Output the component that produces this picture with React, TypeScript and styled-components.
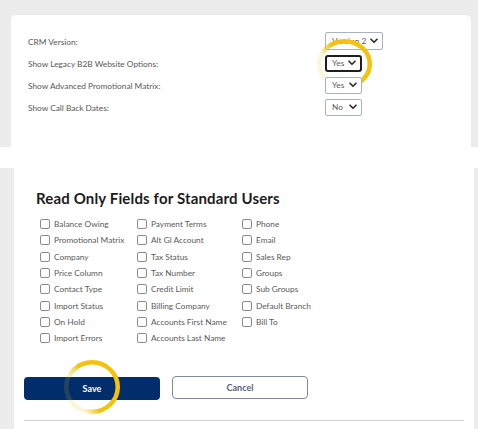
import React from "react";
import styled, { createGlobalStyle } from "styled-components";

const GlobalStyle = createGlobalStyle`
    html, body {
        margin: 0;
        padding: 0;
        background: #ffffff;
    }
    body {
        font-family: Lato, "Liberation Sans", Arial, sans-serif;
        -webkit-font-smoothing: antialiased;
    }
`;

type SelectOption = {
    label: string;
    value: string;
    wide?: boolean;
    focused?: boolean;
    marked?: boolean;
};

const settings: SelectOption[] = [
    { label: "CRM Version:", value: "Version 2", wide: true },
    { label: "Show Legacy B2B Website Options:", value: "Yes", focused: true, marked: true },
    { label: "Show Advanced Promotional Matrix:", value: "Yes" },
    { label: "Show Call Back Dates:", value: "No" },
];

// fields listed column by column
const readOnlyFields: string[][] = [
    [
        "Balance Owing",
        "Promotional Matrix",
        "Company",
        "Price Column",
        "Contact Type",
        "Import Status",
        "On Hold",
        "Import Errors",
    ],
    [
        "Payment Terms",
        "Alt Gl Account",
        "Tax Status",
        "Tax Number",
        "Credit Limit",
        "Billing Company",
        "Accounts First Name",
        "Accounts Last Name",
    ],
    ["Phone", "Email", "Sales Rep", "Groups", "Sub Groups", "Default Branch", "Bill To"],
];

function Chevron() {
    return (
        <svg width="8" height="6" viewBox="0 0 8 6">
            <path d="M1 1.2 L4 4.3 L7 1.2" fill="none" stroke="#2b2b2b" strokeWidth="1.6" strokeLinecap="round" strokeLinejoin="round" />
        </svg>
    );
}

// hand-drawn highlight ring
function Ring({ id, w, h }: { id: string; w: number; h: number }) {
    const sw = 4.5;
    return (
        <svg width={w} height={h} viewBox={`0 0 ${w} ${h}`}>
            <defs>
                <linearGradient id={id} x1="0" y1="0.2" x2="0.45" y2="0">
                    <stop offset="0" stopColor="#f4c20d" stopOpacity="0.15" />
                    <stop offset="0.55" stopColor="#f4c20d" stopOpacity="1" />
                    <stop offset="1" stopColor="#f4c20d" stopOpacity="1" />
                </linearGradient>
            </defs>
            <ellipse
                cx={w / 2}
                cy={h / 2}
                rx={(w - sw) / 2}
                ry={(h - sw) / 2}
                fill="none"
                stroke={`url(#${id})`}
                strokeWidth={sw}
            />
        </svg>
    );
}

export default function App() {
    return (
        <>
            <GlobalStyle />
            <TopPanel>
                <SettingsCard>
                    <SettingsGrid>
                        {settings.map((s) => (
                            <React.Fragment key={s.label}>
                                <SettingLabel>{s.label}</SettingLabel>
                                <SelectWrap>
                                    <SelectBox $wide={s.wide} $focused={s.focused}>
                                        <SelectValue>{s.value}</SelectValue>
                                        <Chevron />
                                    </SelectBox>
                                    {s.marked && (
                                        <SelectRing>
                                            <Ring id="ring-select" w={55} h={50} />
                                        </SelectRing>
                                    )}
                                </SelectWrap>
                            </React.Fragment>
                        ))}
                    </SettingsGrid>
                </SettingsCard>
            </TopPanel>

            <BottomPanel>
                <FieldsCard>
                    <Heading>Read Only Fields for Standard Users</Heading>
                    <FieldColumns>
                        {readOnlyFields.map((col, i) => (
                            <FieldColumn key={i}>
                                {col.map((name) => (
                                    <FieldRow key={name}>
                                        <Check type="checkbox" />
                                        <FieldName>{name}</FieldName>
                                    </FieldRow>
                                ))}
                            </FieldColumn>
                        ))}
                    </FieldColumns>

                    <Actions>
                        <ButtonWrap>
                            <PrimaryButton>Save</PrimaryButton>
                            <SaveRing>
                                <Ring id="ring-save" w={56} h={54} />
                            </SaveRing>
                        </ButtonWrap>
                        <OutlineButton>Cancel</OutlineButton>
                    </Actions>
                    <Divider />
                </FieldsCard>
            </BottomPanel>
        </>
    );
}

// style
const TopPanel = styled.section`
    box-sizing: border-box;
    height: 147px;
    padding: 15px 7px 0 11px;
    background: #ececec;
`;

const SettingsCard = styled.div`
    box-sizing: border-box;
    height: 100%;
    padding: 17px 0 0 17px;
    background: #ffffff;
    border-radius: 5px 5px 0 0;
`;

const SettingsGrid = styled.div`
    display: grid;
    grid-template-columns: 297px auto;
    grid-auto-rows: 18px;
    row-gap: 4px;
    align-items: center;
`;

const SettingLabel = styled.div`
    font-size: 8.3px;
    color: #585858;
    line-height: 18px;
    padding-top: 2px;
`;

const SelectWrap = styled.div`
    position: relative;
    display: flex;
    align-items: center;
    height: 18px;
`;

const SelectBox = styled.div<{ $wide?: boolean; $focused?: boolean }>`
    box-sizing: border-box;
    display: flex;
    align-items: center;
    justify-content: space-between;
    width: ${(p) => (p.$wide ? "58px" : "37px")};
    height: ${(p) => (p.$wide ? "18px" : "17px")};
    padding: 0 4px 0 ${(p) => (p.$focused ? "5px" : "6px")};
    background: #ffffff;
    border: ${(p) => (p.$focused ? "2px solid #1e1e1e" : "1px solid #a9b2bf")};
    border-radius: ${(p) => (p.$focused ? "3px" : "2px")};
`;

const SelectValue = styled.span`
    font-size: 8.3px;
    color: #5a5a5a;
    white-space: nowrap;
`;

const SelectRing = styled.div`
    position: absolute;
    left: -8px;
    top: -15px;
    pointer-events: none;
`;

const BottomPanel = styled.section`
    box-sizing: border-box;
    height: 261px;
    margin-top: 21px;
    padding: 0 4px 0 14px;
    background: #ececec;
`;

const FieldsCard = styled.div`
    box-sizing: border-box;
    height: 100%;
    padding: 21px 10px 0 10px;
    background: #ffffff;
`;

const Heading = styled.h2`
    margin: 0 0 9px 12px;
    font-size: 15px;
    line-height: 18px;
    font-weight: 700;
    letter-spacing: 0.15px;
    color: #1c1c1c;
`;

const FieldColumns = styled.div`
    display: grid;
    grid-template-columns: 97px 105px auto;
    margin-left: 16px;
`;

const FieldColumn = styled.div`
    display: flex;
    flex-direction: column;
`;

const FieldRow = styled.label`
    display: flex;
    align-items: center;
    gap: 4px;
    height: 16.3px;
`;

const Check = styled.input`
    appearance: none;
    box-sizing: border-box;
    width: 10px;
    height: 10px;
    margin: 0;
    border: 1px solid #8c8c8c;
    border-radius: 2px;
    background: #ffffff;
`;

const FieldName = styled.span`
    font-size: 8.3px;
    color: #5a5a5a;
    white-space: nowrap;
`;

const Actions = styled.div`
    display: flex;
    gap: 12px;
    margin-top: 30px;
`;

const ButtonWrap = styled.div`
    position: relative;
`;

const BaseButton = styled.button`
    box-sizing: border-box;
    width: 136px;
    height: 23px;
    border-radius: 4px;
    font-family: Lato, "Liberation Sans", Arial, sans-serif;
    font-size: 9px;
    font-weight: 700;
    cursor: pointer;
`;

const PrimaryButton = styled(BaseButton)`
    border: none;
    background: #012d6b;
    color: #ffffff;
`;

const OutlineButton = styled(BaseButton)`
    border: 1.5px solid #7c8a9e;
    background: #ffffff;
    color: #56627a;
`;

const SaveRing = styled.div`
    position: absolute;
    left: 40px;
    top: -16px;
    pointer-events: none;
`;

const Divider = styled.hr`
    margin: 20px 0 0 0;
    border: none;
    border-top: 1px solid #cfd3d8;
`;
